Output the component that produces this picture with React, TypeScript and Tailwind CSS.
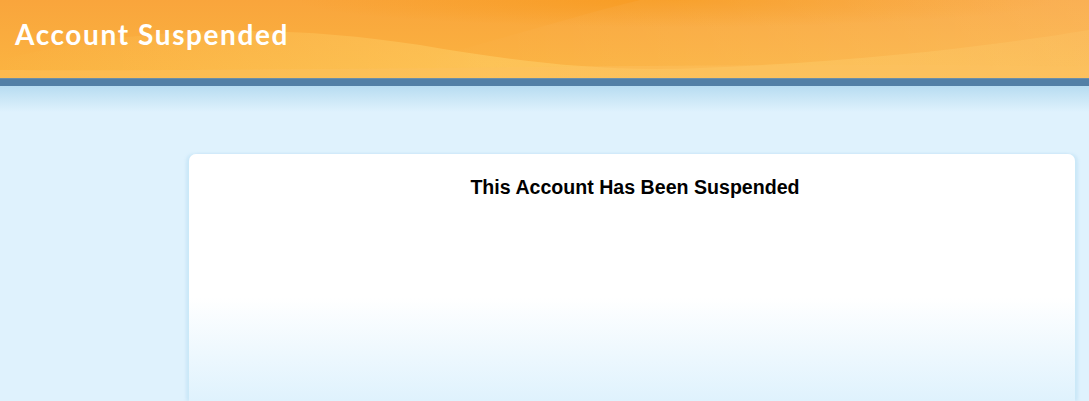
import React from 'react';

function HeaderWaves() {
  return (
    <svg className="absolute inset-0 h-full w-full" viewBox="0 0 1089 78" preserveAspectRatio="none">
      <defs>
        <linearGradient id="glow" x1="0" y1="0" x2="1" y2="0">
          <stop offset="0" stopColor="#ffd36a" stopOpacity="0" />
          <stop offset="0.45" stopColor="#ffd36a" stopOpacity="0.5" />
          <stop offset="1" stopColor="#ffd36a" stopOpacity="0.15" />
        </linearGradient>
        <linearGradient id="right" x1="0" y1="0" x2="1" y2="0">
          <stop offset="0" stopColor="#ffffff" stopOpacity="0" />
          <stop offset="1" stopColor="#ffffff" stopOpacity="0.25" />
        </linearGradient>
        <radialGradient id="hot" cx="0.62" cy="0" r="0.35">
          <stop offset="0" stopColor="#f7950f" stopOpacity="0.55" />
          <stop offset="1" stopColor="#f7950f" stopOpacity="0" />
        </radialGradient>
      </defs>
      <rect x="0" y="0" width="1089" height="78" fill="url(#hot)" />
      <path d="M0 60 C 120 30, 260 20, 420 45 C 520 62, 600 72, 700 68 C 850 62, 980 48, 1089 30 L1089 78 L0 78 Z" fill="url(#glow)" />
      <path d="M640 0 C 560 20, 500 40, 420 60 L 420 78 L 1089 78 L 1089 0 Z" fill="url(#right)" opacity="0.5" />
      <path d="M0 78 L0 70 C 300 72, 700 62, 1089 66 L1089 78 Z" fill="#fcc060" opacity="0.45" />
    </svg>
  );
}

export default function App() {
  return (
    <div className="min-h-[401px] w-full bg-[#dff2fd] font-['Liberation_Sans',Arial,sans-serif]">
      {/* Header */}
      <div className="relative h-[78px] overflow-hidden bg-gradient-to-b from-[#f9a53c] to-[#fbb441]">
        <HeaderWaves />
        <h1 className="relative pl-[15px] pt-[17px] font-['Lato',sans-serif] text-[28px] font-bold leading-[34px] tracking-[1.6px] text-white">
          Account Suspended
        </h1>
      </div>
      <div className="h-[8px] bg-[#527fa6] border-t border-[#6b8ea8]" />
      <div className="h-[26px] bg-gradient-to-b from-[#b7dcf1] to-[#dff2fd]" />

      {/* Content */}
      <div className="flex pl-[189px] pr-[14px] pt-[42px]">
        <div className="flex-1 h-[247px] rounded-t-[7px] bg-gradient-to-b from-white from-[58%] to-[#dff2fd] shadow-[-3px_0_3px_rgba(190,225,245,0.6),3px_0_3px_rgba(190,225,245,0.6)]">
          <h2 className="pl-[6px] pt-[21px] text-center text-[19.6px] font-bold leading-[24px] text-black">
            This Account Has Been Suspended
          </h2>
        </div>
      </div>
    </div>
  );
}
